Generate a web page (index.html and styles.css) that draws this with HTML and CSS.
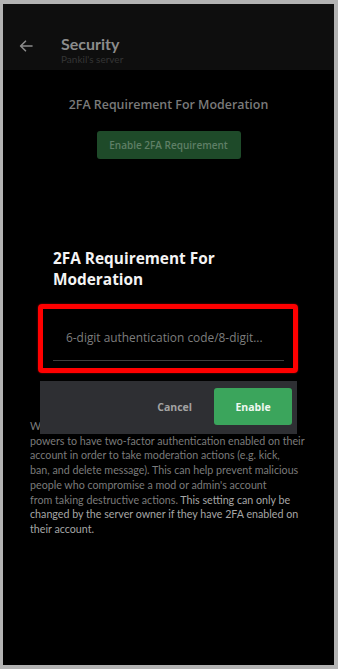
FILE: index.html
```html
<!DOCTYPE html>
<html lang="en">
<head>
<meta charset="utf-8">
<title>Security</title>
<link rel="stylesheet" href="styles.css">
</head>
<body>
<div class="screen">
  <header class="appbar">
    <svg class="back" width="14" height="12" viewBox="0 0 14 12" aria-hidden="true">
      <path d="M13 6H2M6.5 1.2L1.6 6l4.9 4.8" fill="none" stroke="#8a8a8a" stroke-width="1.6" stroke-linecap="round" stroke-linejoin="round"/>
    </svg>
    <div class="titles">
      <div class="title">Security</div>
      <div class="subtitle">Pankil's server</div>
    </div>
  </header>
  <main class="content">
    <h2 class="section-title">2FA Requirement For Moderation</h2>
    <button class="btn-enable-bg">Enable 2FA Requirement</button>
    <p class="desc">When enabled, requires all members with moderation<br>powers to have two-factor authentication enabled on their<br>account in order to take moderation actions (e.g. kick,<br>ban, and delete message). This can help prevent malicious<br>people who compromise a mod or admin's account<br>from taking destructive actions. <strong>This setting can only be<br>changed by the server owner if they have 2FA enabled on<br>their account.</strong></p>
  </main>

  <div class="dialog">
    <div class="dialog-body">
      <h3 class="dialog-title">2FA Requirement For<br>Moderation</h3>
      <div class="field">6-digit authentication code/8-digit...</div>
    </div>
    <div class="dialog-footer">
      <button class="btn-cancel">Cancel</button>
      <button class="btn-confirm">Enable</button>
    </div>
  </div>

  <div class="highlight"></div>
</div>
</body>
</html>
```
FILE: styles.css
```css
* { box-sizing: border-box; }
html, body { margin: 0; padding: 0; }
body {
  background: #b3b3b3;
  width: 338px;
  height: 669px;
  font-family: "Open Sans", "Noto Sans", sans-serif;
}
.screen {
  position: relative;
  margin: 4px 4px 4px 3px;
  width: 331px;
  height: 661px;
  background: #000;
  overflow: hidden;
}
.appbar {
  height: 66px;
  background: #0e0e0e;
  display: flex;
  align-items: center;
  padding: 24px 0 0 16px;
}
.back { display: block; margin-top: -6px; }
.titles {
  margin-left: 28px;
  font-family: Lato, "Open Sans", sans-serif;
}
.title {
  color: #8c8c8c;
  font-weight: 700;
  font-size: 16px;
  line-height: 19px;
}
.subtitle {
  color: #353535;
  font-size: 10px;
  line-height: 12px;
}
.content {
  display: flex;
  flex-direction: column;
  align-items: center;
}
.section-title {
  margin: 26px 0 0;
  color: #7a7a7a;
  font-size: 12.4px;
  font-weight: 600;
  line-height: 18px;
}
.btn-enable-bg {
  margin-top: 17px;
  width: 144px;
  height: 28px;
  border: 0;
  border-radius: 3px;
  background: #1e4a29;
  color: #5e7f66;
  font-family: inherit;
  font-size: 10px;
  font-weight: 600;
}
.desc {
  align-self: stretch;
  margin: 260px 0 0;
  padding-left: 27px;
  color: #7b7b7b;
  font-family: Lato, "Open Sans", sans-serif;
  font-size: 10.7px;
  line-height: 14.7px;
  white-space: nowrap;
}
.desc strong { color: #a6a6a6; font-weight: 400; }

.dialog {
  position: absolute;
  left: 37px;
  top: 228px;
  width: 257px;
  background: #000;
}
.dialog-body {
  padding: 16px 13px 20px;
}
.dialog-title {
  margin: 0;
  color: #f4f4f4;
  font-size: 15.4px;
  font-weight: 700;
  line-height: 21px;
}
.field {
  margin-top: 32px;
  height: 39px;
  padding: 6px 0 0 13px;
  border-bottom: 1px solid #3e3e3e;
  color: #7d7d7d;
  font-size: 11.9px;
  line-height: 18px;
}
.dialog-footer {
  height: 53px;
  background: #2e2f33;
  display: flex;
  align-items: center;
  justify-content: flex-end;
  padding: 0 5px 2px 0;
  gap: 22px;
}
.btn-cancel {
  border: 0;
  background: none;
  color: #a3a3a3;
  font-family: inherit;
  font-size: 10.5px;
  font-weight: 700;
  padding: 0;
}
.btn-confirm {
  width: 78px;
  height: 37px;
  border: 0;
  border-radius: 3px;
  background: #3ba55c;
  color: #eef8f0;
  font-family: inherit;
  font-size: 10.5px;
  font-weight: 700;
}
.highlight {
  position: absolute;
  left: 35px;
  top: 300px;
  width: 260px;
  height: 69px;
  border: 5px solid #f00;
  border-radius: 4px;
  box-shadow: 0 0 2px rgba(255,0,0,0.6);
}
```
